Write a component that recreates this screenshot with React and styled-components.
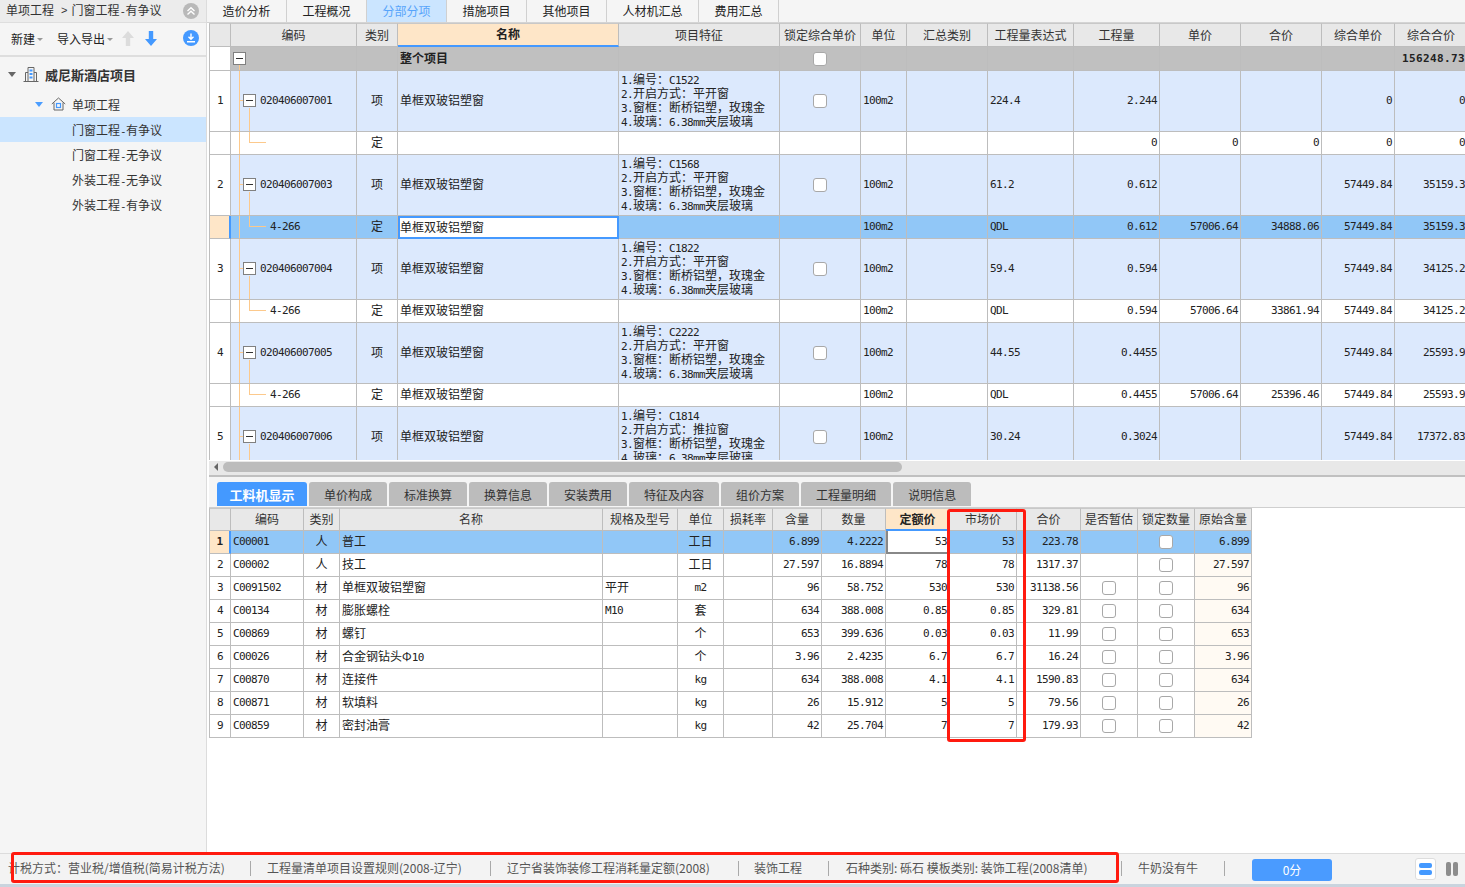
import React from 'react'
import styled, { createGlobalStyle } from 'styled-components'

const GlobalStyle = createGlobalStyle`
  html, body { margin: 0; padding: 0; background: #fff; overflow: hidden; }
  body { font-family: "Noto Sans CJK SC", "Liberation Sans", sans-serif; font-size: 12px; color: #222; }
  * { box-sizing: border-box; }
`

const TOP_COLS = '22px 126px 41px 221px 161px 81px 46px 81px 86px 86px 81px 81px 73px 73px'
const LOW_COLS = '22px 73px 36px 263px 75px 46px 49px 49px 64px 64px 67px 64px 57px 57px 57px'
const LINE = '#bdbdbd'
const BLUE = '#4499ff'
const TREE = '#fcc98c'

const Page = styled.div`
  position: relative;
  width: 1465px;
  height: 887px;
  display: flex;
  flex-direction: column;
  overflow: hidden;
`
const Body = styled.div`
  flex: 1;
  min-height: 0;
  display: flex;
`

/* left tree */
const Sidebar = styled.aside`
  width: 207px;
  flex: none;
  background: #f5f5f5;
  border-right: 1px solid #dcdcdc;
`
const Crumb = styled.div`
  height: 23px;
  display: flex;
  align-items: center;
  padding: 0 7px 3px 6px;
  background: #ececec;
  border-bottom: 1px solid #dedede;
  color: #333;
  white-space: nowrap;
`
const CrumbSep = styled.span`
  margin: 0 4px 0 7px;
  font-family: "Liberation Sans", sans-serif;
  font-size: 11px;
`
const RoundBtn = styled.span`
  margin-left: auto;
  margin-top: ${p => p.$drop || 0}px;
  width: 16px;
  height: 16px;
  flex: none;
  border-radius: 50%;
  background: ${p => p.$blue ? BLUE : '#b9b9b9'};
  display: flex;
  align-items: center;
  justify-content: center;
`
const Toolbar = styled.div`
  height: 34px;
  display: flex;
  align-items: center;
  padding: 0 7px 2px 11px;
  border-bottom: 2px solid #dedede;
  color: #222;
  white-space: nowrap;
`
const ToolItem = styled.span`
  display: flex;
  align-items: center;
  flex: none;
  margin-right: ${p => p.$gap}px;
`
const Caret = styled.i`
  display: block;
  margin: 2px 0 0 2px;
  border-left: 3px solid transparent;
  border-right: 3px solid transparent;
  border-top: 3px solid #999;
`
const TreeList = styled.div`
  padding-top: 4px;
`
const ProjectRow = styled.div`
  height: 28px;
  margin-bottom: 2px;
  padding: 0 0 2px 8px;
  display: flex;
  align-items: center;
  font-size: 13px;
  font-weight: 700;
  color: #333;
`
const FolderRow = styled.div`
  height: 26px;
  display: flex;
  align-items: center;
  padding-left: 35px;
  color: #333;
`
const Arrow = styled.i`
  display: block;
  margin-right: ${p => p.$gap}px;
  border-left: 4px solid transparent;
  border-right: 4px solid transparent;
  border-top: 5px solid ${p => p.$color};
`
const Leaf = styled.div`
  height: 25px;
  line-height: 25px;
  padding-left: 72px;
  color: #333;
  background: ${p => p.$on ? '#cbe5ff' : 'transparent'};
`

/* right side */
const Main = styled.main`
  flex: 1;
  min-width: 0;
  display: flex;
  flex-direction: column;
  background: #fff;
`
const TopTabs = styled.nav`
  height: 23px;
  flex: none;
  display: flex;
  background: #f5f5f5;
  border-bottom: 1px solid #d4d4d4;
`
const TopTab = styled.div`
  width: ${p => p.$w}px;
  text-align: center;
  line-height: 21px;
  border-right: 1px solid #d0d0d0;
  color: ${p => p.$on ? '#57a4fb' : '#222'};
  background: ${p => p.$on ? '#cbe5ff' : 'transparent'};
`
const GridClip = styled.div`
  height: 437px;
  flex: none;
  margin-left: 2px;
  overflow: hidden;
`
const Row = styled.div`
  display: grid;
  grid-template-columns: ${p => p.$cols};
  height: ${p => p.$h}px;
  width: max-content;
  background: ${p => ({ group: '#c0c0c0', item: '#dce9fd', current: '#91c7f7' }[p.$kind] || '#fff')};
`
const Cell = styled.div`
  position: relative;
  display: flex;
  align-items: center;
  justify-content: ${p => ({ right: 'flex-end', center: 'center' }[p.$align] || 'flex-start')};
  padding: 0 2px 3px;
  min-width: 0;
  overflow: hidden;
  white-space: nowrap;
  border-right: 1px solid ${LINE};
  border-bottom: 1px solid ${LINE};
  background: ${p => p.$bg || 'transparent'};
  font-weight: ${p => p.$bold ? 700 : 400};
`
const HeadCell = styled.div`
  display: flex;
  align-items: center;
  justify-content: center;
  padding-bottom: 2px;
  white-space: nowrap;
  color: ${p => p.$on ? '#222' : '#333'};
  font-weight: ${p => p.$on ? 700 : 400};
  background: ${p => p.$on ? '#fee6c8' : '#e8e8e8'};
  border-top: 1px solid #c8c8c8;
  border-right: 1px solid ${LINE};
  border-bottom: ${p => p.$on ? `2px solid ${BLUE}` : `1px solid ${LINE}`};
  &:first-child { border-left: 1px solid ${LINE}; }
`
const RowHead = styled(Cell)`
  justify-content: center;
  border-left: 1px solid ${LINE};
  background: ${p => p.$on ? '#fee6c8' : '#fff'};
  border-right: ${p => p.$on ? `2px solid ${BLUE}` : `1px solid ${LINE}`};
  font-weight: ${p => p.$on ? 700 : 400};
`
const EditName = styled(Cell)`
  background: #fff;
  border: 2px solid ${BLUE};
  padding: 0 0 2px;
`
const EditPrice = styled(Cell)`
  background: #fff;
  border-left: 2px solid #888;
  border-bottom: 2px solid #888;
`
const Latin = styled.span`
  font-family: "DejaVu Sans Mono", monospace;
  font-size: 11px;
  letter-spacing: -0.62px;
`
/* a number standing alone in a cell, evens out the cell's lifted CJK baseline */
const CellNum = styled(Latin)`
  padding-top: 2px;
  margin-left: ${p => p.$left || 0}px;
`
const BoldNum = styled.span`
  padding-top: 2px;
  font-family: "DejaVu Sans Mono", monospace;
  font-size: 11px;
  font-weight: 700;
  letter-spacing: 0.38px;
`
const Feature = styled.div`
  align-self: flex-start;
  padding-top: 1px;
`
const FeatureLine = styled.div`
  height: 14px;
  line-height: 14px;
`
const Check = styled.span`
  display: block;
  width: 14px;
  height: 14px;
  margin-top: 3px;
  background: #fff;
  border: 1px solid #a8a8a8;
  border-radius: 3px;
`

/* tree connectors sit over the code cell */
const Trunk = styled.i`
  position: absolute;
  left: 8px;
  top: ${p => p.$top || 0}px;
  bottom: 0;
  width: 1px;
  background: ${TREE};
`
const BranchDown = styled.i`
  position: absolute;
  left: 18px;
  top: 37px;
  bottom: 0;
  width: 1px;
  background: ${TREE};
`
const BranchEnd = styled.i`
  position: absolute;
  left: 18px;
  top: 0;
  height: 11px;
  width: 17px;
  border-left: 1px solid ${TREE};
  border-bottom: 1px solid ${TREE};
`
const Stub = styled.i`
  position: absolute;
  left: 8px;
  top: 29px;
  width: 4px;
  height: 1px;
  background: ${TREE};
`
const MinusBox = styled.span`
  position: absolute;
  left: ${p => p.$left}px;
  top: 50%;
  width: 13px;
  height: 13px;
  margin-top: -7px;
  background: #fff;
  border: 1px solid #808080;
  &::after {
    content: '';
    position: absolute;
    left: 2px;
    right: 2px;
    top: 5px;
    height: 1px;
    background: #333;
  }
`

const ScrollBar = styled.div`
  height: 17px;
  flex: none;
  display: flex;
  align-items: center;
  padding: 1px 0 0 5px;
  margin-left: 2px;
  background: linear-gradient(#fff 1px, #e8e8e8 1px);
  border-bottom: 2px solid #c0c0c0;
`
const ScrollArrow = styled.i`
  display: block;
  margin-top: -2px;
  border-top: 4px solid transparent;
  border-bottom: 4px solid transparent;
  border-right: 4px solid #666;
`
const ScrollThumb = styled.div`
  width: 679px;
  height: 10px;
  margin: -2px 0 0 5px;
  border-radius: 5px;
  background: #bcbcbc;
`
const SubTabs = styled.div`
  height: 31px;
  flex: none;
  display: flex;
  align-items: flex-end;
  gap: 2px;
  padding: 0 0 1px 8px;
  margin-left: 2px;
  background: #f5f5f5;
  border-bottom: 1px solid #cfcfcf;
`
const SubTab = styled.div`
  height: 24px;
  line-height: 25px;
  padding: 0 ${p => p.$on ? 12.5 : 15}px;
  border-radius: 3px 3px 0 0;
  background: ${p => p.$on ? BLUE : '#bcbcbc'};
  color: ${p => p.$on ? '#fff' : '#333'};
  font-size: ${p => p.$on ? 13 : 12}px;
  font-weight: ${p => p.$on ? 700 : 400};
`
const LowerGrid = styled.div`
  margin-left: 2px;
`

/* status bar */
const StatusBar = styled.footer`
  height: 31px;
  flex: none;
  display: flex;
  align-items: center;
  background: #f3f3f3;
  border-top: 1px solid #dcdcdc;
  color: #555;
`
const StatusItem = styled.div`
  width: ${p => p.$w}px;
  flex: none;
  height: 15px;
  line-height: 14px;
  margin-top: -1px;
  padding-left: ${p => p.$pad}px;
  white-space: nowrap;
  border-right: 1px solid #a9a9a9;
`
const ScoreBtn = styled.div`
  width: 80px;
  height: 22px;
  margin: 1px 0 0 27px;
  line-height: 22px;
  text-align: center;
  border-radius: 3px;
  background: #4a9bff;
  color: #fff;
`
const ViewToggle = styled.div`
  display: flex;
  align-items: center;
  margin: 0 7px 0 auto;
  gap: 10px;
`
const ViewBtn = styled.div`
  width: 21px;
  height: 22px;
  padding: 4px 3px;
  display: flex;
  flex-direction: column;
  gap: 2px;
  background: #fff;
  border: 1px solid #ddd;
  border-radius: 3px;
`
const ViewBarH = styled.i`
  flex: 1;
  background: ${BLUE};
  border-radius: 2px;
`
const ViewCols = styled.div`
  display: flex;
  gap: 2px;
  height: 14px;
`
const ViewBarV = styled.i`
  width: 5px;
  background: #8d8d8d;
  border-radius: 2px;
`
const TaskStrip = styled.div`
  height: 3px;
  flex: none;
  background: #c9d4de;
`
const RedBox = styled.div`
  position: absolute;
  left: ${p => p.$x}px;
  top: ${p => p.$y}px;
  width: ${p => p.$w}px;
  height: ${p => p.$h}px;
  border: 3px solid #ff1a0f;
  border-radius: 3px;
  pointer-events: none;
`

/* splits a string so digits and latin letters get the narrow mono face */
const Mixed = ({ text }) => String(text).split(/([\x20-\x7e]+)/).map((part, i) =>
  /^[\x20-\x7e]+$/.test(part) ? <Latin key={i}>{part}</Latin> : part
)
const CellText = ({ text }) => {
  if (!text) return null
  return /^[\x20-\x7e]+$/.test(text) ? <CellNum>{text}</CellNum> : <span><Mixed text={text} /></span>
}

const Building = () => (
  <svg width="16" height="16" viewBox="0 0 16 16" style={{ margin: '0 6px 0 7px' }}>
    <path d="M.5 15.500h15M2.500 15V6.500H5M13.500 15V6.500H11M5 15V1.500h6V15" fill="none" stroke="#666" strokeWidth="1" />
    <path d="M6.500 3.500h3v2h-3zM6.500 7h3v2h-3zM6.500 10.500h3v2h-3z" fill="#4499ff" />
  </svg>
)
const House = () => (
  <svg width="15" height="14" viewBox="0 0 15 14" style={{ margin: '0 6px 0 0' }}>
    <path d="M.8 7 7.500 1l6.700 6M3 5.600V13h9V5.600" fill="none" stroke="#666" strokeWidth="1" />
    <rect x="5.500" y="6.500" width="4" height="4" fill="none" stroke="#4499ff" strokeWidth="1.200" />
  </svg>
)
const VArrow = ({ up, color }) => (
  <svg width="12" height="15" viewBox="0 0 12 15" style={{ marginRight: 11, flex: 'none' }}>
    <path d={up ? 'M6 0l6 7H8.200v8H3.800V7H0z' : 'M6 15l6-7H8.200V0H3.800v8H0z'} fill={color} />
  </svg>
)
const ChevronsUp = () => (
  <svg width="10" height="10" viewBox="0 0 10 10">
    <path d="M1.500 5 5 1.800 8.500 5M1.500 8.500 5 5.300 8.500 8.500" fill="none" stroke="#fff" strokeWidth="1.400" />
  </svg>
)
const DownloadMark = () => (
  <svg width="10" height="10" viewBox="0 0 10 10">
    <path d="M5 .5v5.500M2.500 3.800 5 6.300l2.500-2.500M1 8.800h8" fill="none" stroke="#fff" strokeWidth="1.400" />
  </svg>
)

const TOP_HEAD = ['', '编码', '类别', '名称', '项目特征', '锁定综合单价', '单位', '汇总类别', '工程量表达式', '工程量', '单价', '合价', '综合单价', '综合合价']
const TOP_TABS = [['造价分析', 80], ['工程概况', 80], ['分部分项', 80, true], ['措施项目', 80], ['其他项目', 80], ['人材机汇总', 92], ['费用汇总', 80]]
const SUB_TABS = ['工料机显示', '单价构成', '标准换算', '换算信息', '安装费用', '特征及内容', '组价方案', '工程量明细', '说明信息']
const LEAVES = ['门窗工程-有争议', '门窗工程-无争议', '外装工程-无争议', '外装工程-有争议']
const NAME = '单框双玻铝塑窗'

const ITEMS = [
  { no: 1, code: '020406007001', tag: 'C1522', open: '平开窗', expr: '224.4', qty: '2.244', cu: '0', ct: '0',
    sub: { qty: '0', price: '0', total: '0', cu: '0', ct: '0' } },
  { no: 2, code: '020406007003', tag: 'C1568', open: '平开窗', expr: '61.2', qty: '0.612', cu: '57449.84', ct: '35159.3',
    sub: { code: '4-266', filled: true, current: true, qty: '0.612', price: '57006.64', total: '34888.06', cu: '57449.84', ct: '35159.3' } },
  { no: 3, code: '020406007004', tag: 'C1822', open: '平开窗', expr: '59.4', qty: '0.594', cu: '57449.84', ct: '34125.2',
    sub: { code: '4-266', filled: true, qty: '0.594', price: '57006.64', total: '33861.94', cu: '57449.84', ct: '34125.2' } },
  { no: 4, code: '020406007005', tag: 'C2222', open: '平开窗', expr: '44.55', qty: '0.4455', cu: '57449.84', ct: '25593.9',
    sub: { code: '4-266', filled: true, qty: '0.4455', price: '57006.64', total: '25396.46', cu: '57449.84', ct: '25593.9' } },
  { no: 5, code: '020406007006', tag: 'C1814', open: '推拉窗', expr: '30.24', qty: '0.3024', cu: '57449.84', ct: '17372.83' },
]

const LOW_HEAD = ['', '编码', '类别', '名称', '规格及型号', '单位', '损耗率', '含量', '数量', '定额价', '市场价', '合价', '是否暂估', '锁定数量', '原始含量']
const MATERIALS = [
  ['C00001', '人', '普工', '', '工日', '6.899', '4.2222', '53', '223.78', false],
  ['C00002', '人', '技工', '', '工日', '27.597', '16.8894', '78', '1317.37', false],
  ['C0091502', '材', NAME, '平开', 'm2', '96', '58.752', '530', '31138.56', true],
  ['C00134', '材', '膨胀螺栓', 'M10', '套', '634', '388.008', '0.85', '329.81', true],
  ['C00869', '材', '螺钉', '', '个', '653', '399.636', '0.03', '11.99', true],
  ['C00026', '材', '合金钢钻头Φ10', '', '个', '3.96', '2.4235', '6.7', '16.24', true],
  ['C00870', '材', '连接件', '', 'kg', '634', '388.008', '4.1', '1590.83', true],
  ['C00871', '材', '软填料', '', 'kg', '26', '15.912', '5', '79.56', true],
  ['C00859', '材', '密封油膏', '', 'kg', '42', '25.704', '7', '179.93', true],
]
const ORIGIN = ['6.899', '27.597', '96', '634', '653', '3.96', '634', '26', '42']

const Num = ({ v }) => <Cell $align="right"><CellNum>{v}</CellNum></Cell>

function ItemRows({ item }) {
  const { sub } = item
  return (
    <>
      <Row $cols={TOP_COLS} $h={61} $kind="item">
        <RowHead><CellNum>{item.no}</CellNum></RowHead>
        <Cell>
          <Trunk /><Stub /><MinusBox $left={12} /><BranchDown />
          <CellNum $left={27}>{item.code}</CellNum>
        </Cell>
        <Cell $align="center">项</Cell>
        <Cell>{NAME}</Cell>
        <Cell>
          <Feature>
            <FeatureLine><Mixed text={`1.编号：${item.tag}`} /></FeatureLine>
            <FeatureLine><Mixed text={`2.开启方式：${item.open}`} /></FeatureLine>
            <FeatureLine><Mixed text="3.窗框：断桥铝塑，玫瑰金" /></FeatureLine>
            <FeatureLine><Mixed text="4.玻璃：6.38mm夹层玻璃" /></FeatureLine>
          </Feature>
        </Cell>
        <Cell $align="center"><Check /></Cell>
        <Cell><CellNum>100m2</CellNum></Cell>
        <Cell />
        <Cell><CellNum>{item.expr}</CellNum></Cell>
        <Num v={item.qty} />
        <Cell />
        <Cell />
        <Num v={item.cu} />
        <Num v={item.ct} />
      </Row>
      {sub && (
        <Row $cols={TOP_COLS} $h={23} $kind={sub.current ? 'current' : 'sub'}>
          <RowHead $on={sub.current} />
          <Cell>
            <Trunk /><BranchEnd />
            {sub.code && <CellNum $left={37}>{sub.code}</CellNum>}
          </Cell>
          <Cell $align="center">定</Cell>
          {sub.current ? <EditName>{NAME}</EditName> : <Cell>{sub.filled ? NAME : ''}</Cell>}
          <Cell />
          <Cell />
          <Cell>{sub.filled && <CellNum>100m2</CellNum>}</Cell>
          <Cell />
          <Cell>{sub.filled && <CellNum>QDL</CellNum>}</Cell>
          <Num v={sub.qty} />
          <Num v={sub.price} />
          <Num v={sub.total} />
          <Num v={sub.cu} />
          <Num v={sub.ct} />
        </Row>
      )}
    </>
  )
}

function MaterialRow({ m, index }) {
  const [code, kind, name, spec, unit, qty, count, price, total, hasEstimate] = m
  const first = index === 0
  return (
    <Row $cols={LOW_COLS} $h={23} $kind={first ? 'current' : 'sub'}>
      <RowHead $on={first}><CellNum>{index + 1}</CellNum></RowHead>
      <Cell><CellNum>{code}</CellNum></Cell>
      <Cell $align="center">{kind}</Cell>
      <Cell><CellText text={name} /></Cell>
      <Cell><CellText text={spec} /></Cell>
      <Cell $align="center"><CellText text={unit} /></Cell>
      <Cell />
      <Num v={qty} />
      <Num v={count} />
      {first ? <EditPrice $align="right"><CellNum>{price}</CellNum></EditPrice> : <Num v={price} />}
      <Num v={price} />
      <Num v={total} />
      <Cell $align="center">{hasEstimate && <Check />}</Cell>
      <Cell $align="center"><Check /></Cell>
      <Cell $align="right" $bg={first ? 'transparent' : '#fffaf3'}><CellNum>{ORIGIN[index]}</CellNum></Cell>
    </Row>
  )
}

export default function App() {
  return (
    <Page>
      <GlobalStyle />
      <Body>
        <Sidebar>
          <Crumb>
            单项工程<CrumbSep>&gt;</CrumbSep><span><Mixed text="门窗工程-有争议" /></span>
            <RoundBtn $drop={2}><ChevronsUp /></RoundBtn>
          </Crumb>
          <Toolbar>
            <ToolItem $gap={14}>新建<Caret /></ToolItem>
            <ToolItem $gap={9}>导入导出<Caret /></ToolItem>
            <VArrow up color="#dcdcdc" />
            <VArrow color={BLUE} />
            <RoundBtn $blue><DownloadMark /></RoundBtn>
          </Toolbar>
          <TreeList>
            <ProjectRow><Arrow $color="#666" $gap={0} /><Building />威尼斯酒店项目</ProjectRow>
            <FolderRow><Arrow $color="#4a9dff" $gap={8} /><House />单项工程</FolderRow>
            {LEAVES.map((t, i) => <Leaf key={t} $on={i === 0}><Mixed text={t} /></Leaf>)}
          </TreeList>
        </Sidebar>
        <Main>
          <TopTabs>
            {TOP_TABS.map(([t, w, on]) => <TopTab key={t} $w={w} $on={on}>{t}</TopTab>)}
          </TopTabs>
          <GridClip>
            <Row $cols={TOP_COLS} $h={24}>
              {TOP_HEAD.map((t, i) => <HeadCell key={i} $on={t === '名称'}>{t}</HeadCell>)}
            </Row>
            <Row $cols={TOP_COLS} $h={24} $kind="group">
              <RowHead />
              <Cell><Trunk $top={17} /><MinusBox $left={2} /></Cell>
              <Cell />
              <Cell $bold>整个项目</Cell>
              <Cell />
              <Cell $align="center"><Check /></Cell>
              <Cell /><Cell /><Cell /><Cell /><Cell /><Cell /><Cell />
              <Cell $align="right"><BoldNum>156248.73</BoldNum></Cell>
            </Row>
            {ITEMS.map(item => <ItemRows key={item.no} item={item} />)}
          </GridClip>
          <ScrollBar><ScrollArrow /><ScrollThumb /></ScrollBar>
          <SubTabs>
            {SUB_TABS.map((t, i) => <SubTab key={t} $on={i === 0}>{t}</SubTab>)}
          </SubTabs>
          <LowerGrid>
            <Row $cols={LOW_COLS} $h={23}>
              {LOW_HEAD.map((t, i) => <HeadCell key={i} $on={t === '定额价'}>{t}</HeadCell>)}
            </Row>
            {MATERIALS.map((m, i) => <MaterialRow key={m[0]} m={m} index={i} />)}
          </LowerGrid>
        </Main>
      </Body>
      <StatusBar>
        <StatusItem $w={251} $pad={8}>计税方式：营业税/增值税(简易计税方法)</StatusItem>
        <StatusItem $w={240} $pad={16}>工程量清单项目设置规则(2008-辽宁)</StatusItem>
        <StatusItem $w={248} $pad={16}>辽宁省装饰装修工程消耗量定额(2008)</StatusItem>
        <StatusItem $w={90} $pad={15}>装饰工程</StatusItem>
        <StatusItem $w={293} $pad={17}>石种类别: 砾石 模板类别: 装饰工程(2008清单)</StatusItem>
        <StatusItem $w={103} $pad={16}>牛奶没有牛</StatusItem>
        <ScoreBtn>0分</ScoreBtn>
        <ViewToggle>
          <ViewBtn><ViewBarH /><ViewBarH /></ViewBtn>
          <ViewCols><ViewBarV /><ViewBarV /></ViewCols>
        </ViewToggle>
      </StatusBar>
      <TaskStrip />
      <RedBox $x={947} $y={509} $w={79} $h={233} />
      <RedBox $x={11} $y={852} $w={1108} $h={31} />
    </Page>
  )
}
